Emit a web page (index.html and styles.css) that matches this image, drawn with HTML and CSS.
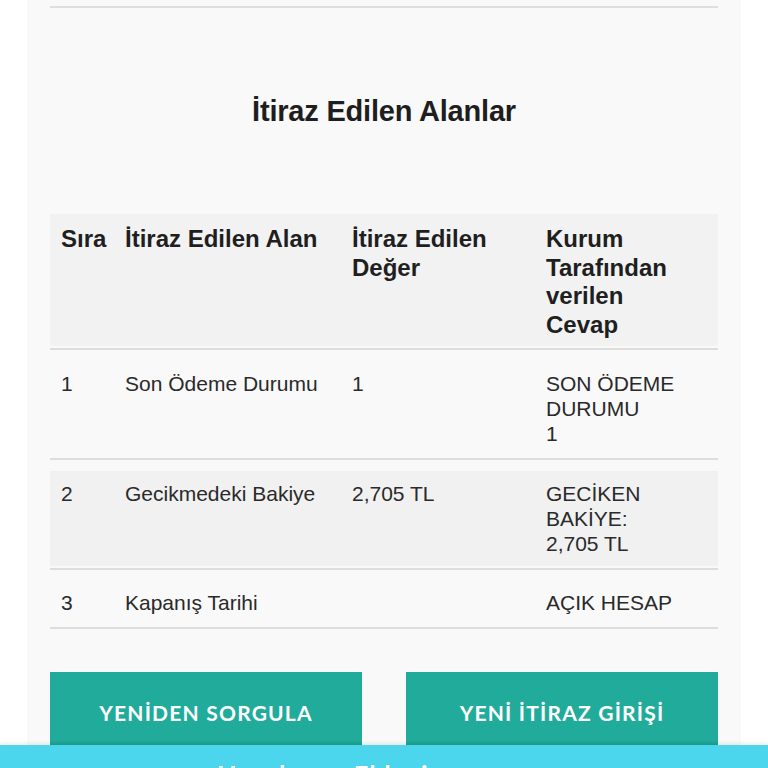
FILE: index.html
```html
<!DOCTYPE html>
<html lang="tr">
<head>
<meta charset="utf-8">
<title>İtiraz Edilen Alanlar</title>
<link rel="stylesheet" href="styles.css">
</head>
<body>
<div class="card">
  <div class="prev-end"></div>
  <h2 class="title">İtiraz Edilen Alanlar</h2>
  <div class="table">
    <div class="row head">
      <div class="cell">Sıra</div>
      <div class="cell">İtiraz Edilen Alan</div>
      <div class="cell">İtiraz Edilen Değer</div>
      <div class="cell">Kurum Tarafından verilen<br>Cevap</div>
    </div>
    <div class="row">
      <div class="cell">1</div>
      <div class="cell">Son Ödeme Durumu</div>
      <div class="cell">1</div>
      <div class="cell">SON ÖDEME DURUMU<br>1</div>
    </div>
    <div class="row alt">
      <div class="cell">2</div>
      <div class="cell">Gecikmedeki Bakiye</div>
      <div class="cell">2,705 TL</div>
      <div class="cell">GECİKEN BAKİYE:<br>2,705 TL</div>
    </div>
    <div class="row">
      <div class="cell">3</div>
      <div class="cell">Kapanış Tarihi</div>
      <div class="cell"></div>
      <div class="cell">AÇIK HESAP</div>
    </div>
  </div>
  <div class="actions">
    <button class="btn">YENİDEN SORGULA</button>
    <button class="btn">YENİ İTİRAZ GİRİŞİ</button>
  </div>
</div>
<div class="bottom-bar"><span>Hesabınızı Ekleyin</span></div>
</body>
</html>
```
FILE: styles.css
```css
html, body {
  margin: 0;
  padding: 0;
  background: #ffffff;
  font-family: "Liberation Sans", Arial, sans-serif;
  color: #222;
}

.card {
  margin: 0 27px;
  padding: 0 23px 40px;
  background: #f9f9f9;
  min-height: 800px;
}

.prev-end {
  height: 6px;
  border-bottom: 2px solid #dedede;
}

.title {
  margin: 0;
  padding-top: 86px;
  height: 48px;
  text-align: center;
  font-size: 29px;
  font-weight: bold;
  line-height: 34px;
  color: #1e1e1e;
  letter-spacing: -0.2px;
}

.table {
  margin-top: 72px;
}

.row {
  display: grid;
  grid-template-columns: 64px 227px 194px 1fr;
  padding-bottom: 2px;
  border-bottom: 2px solid #dddddd;
  background-clip: content-box;
  margin-bottom: 11px;
}

.row:last-child {
  margin-bottom: 0;
}

.row:last-child .cell {
  padding-top: 9px;
  padding-bottom: 10px;
}

.row.alt {
  background-color: #f1f1f1;
}

.row.head {
  background-color: #f2f2f2;
}

.cell {
  padding: 10px 11px;
  font-size: 21px;
  line-height: 25px;
  color: #2a2a2a;
}

.head .cell {
  padding: 11px 11px 7px;
  font-size: 24px;
  line-height: 28.5px;
  font-weight: bold;
  color: #1f1f1f;
}

.actions {
  display: flex;
  justify-content: space-between;
  margin-top: 43px;
}

.btn {
  width: 312px;
  height: 80px;
  border: none;
  background: linear-gradient(#21ab9b 85%, #1a9a8b);
  color: #fff;
  font-family: Lato, "Open Sans", sans-serif;
  font-weight: bold;
  font-size: 21px;
  letter-spacing: 1.2px;
  padding: 0;
}

.bottom-bar {
  position: fixed;
  left: 0;
  right: 0;
  bottom: 0;
  height: 23px;
  background: #4bd6ee;
  overflow: hidden;
  box-shadow: 0 -2px 3px rgba(0,0,0,0.08);
}

.bottom-bar span {
  position: absolute;
  left: 217px;
  top: 14px;
  color: #fff;
  font-family: Lato, "Open Sans", sans-serif;
  font-weight: bold;
  font-size: 26px;
  letter-spacing: 1px;
}
```
